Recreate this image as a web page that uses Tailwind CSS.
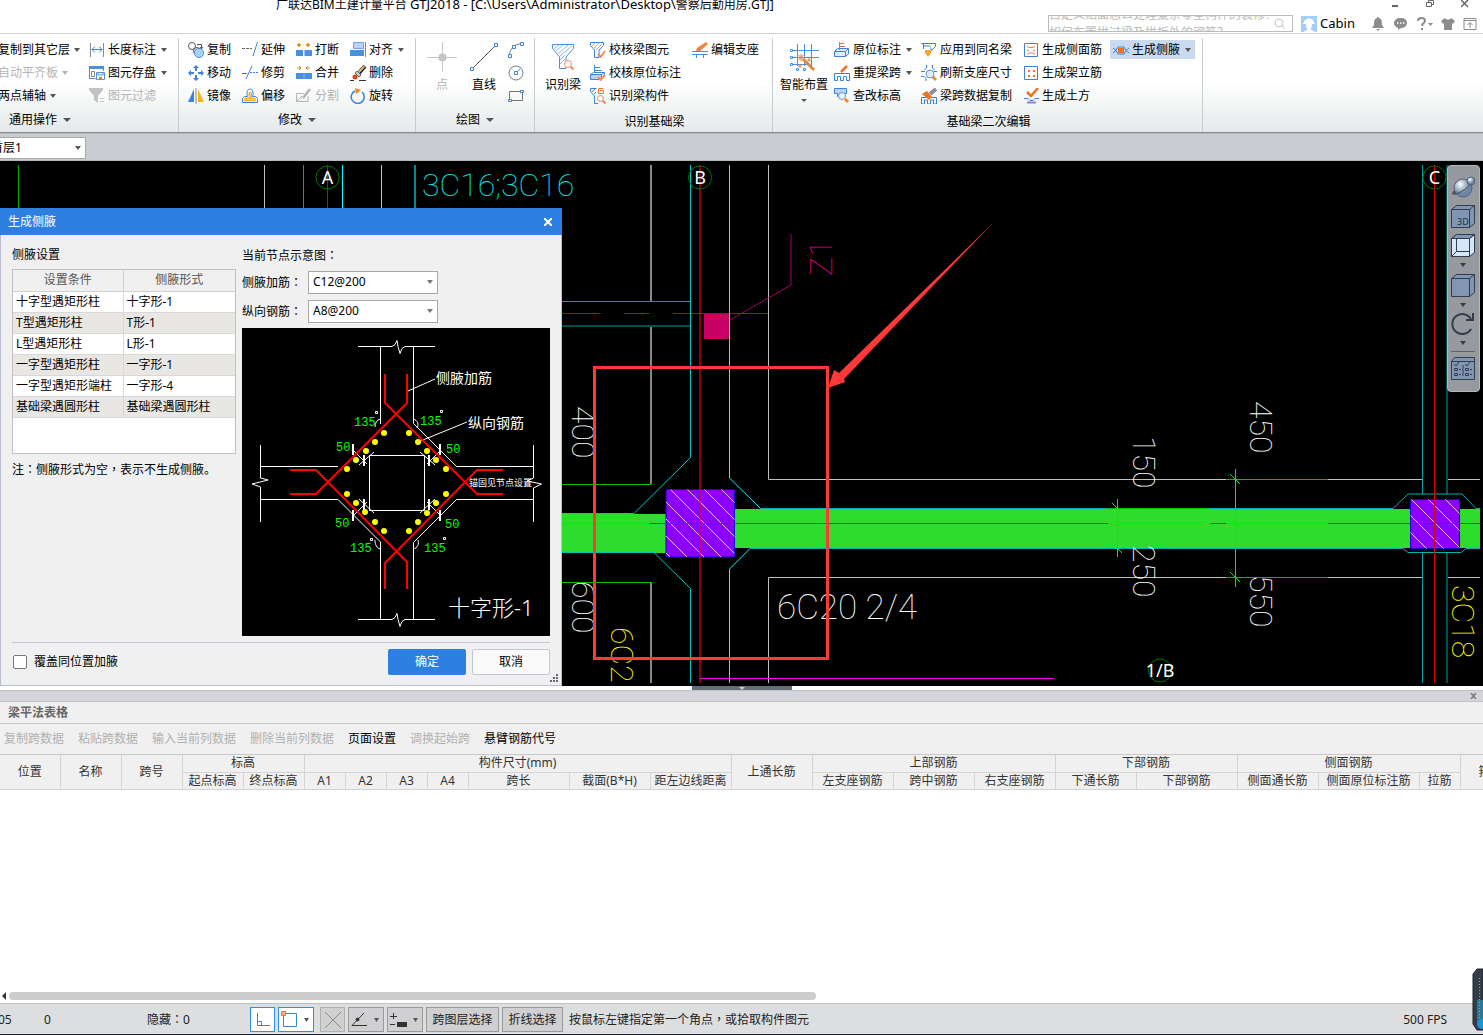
<!DOCTYPE html>
<html lang="zh-CN">
<head>
  <meta charset="UTF-8" />
  <meta name="viewport" content="width=device-width, initial-scale=1.0" />
  <title>广联达BIM土建计量平台 GTJ2018</title>
  <script src="https://cdn.jsdelivr.net/npm/@tailwindcss/browser@4"></script>
</head>
<body class="bg-white text-black text-xs font-['Noto_Sans','Noto_Sans_CJK_SC',sans-serif]">
<div class="relative flex flex-col h-screen overflow-hidden whitespace-nowrap">

  <!-- Title bar -->
  <header class="relative flex-none h-[34px] border-b border-[#d4d4d4] bg-white">
    <h1 class="absolute left-[276px] -top-1 leading-4">广联达BIM土建计量平台 <span class="text-[13px]">GTJ2018 - [C:\Users\Administrator\Desktop\</span>警察后勤用房.GTJ]</h1>
    <div class="absolute right-[14px] top-0 flex gap-[27px] h-2 text-[#666]">
      <button aria-label="最小化"><svg class="block" width="8" height="8"><path d="M1 6h6" stroke="currentColor" stroke-width="2"/></svg></button>
      <button aria-label="还原"><svg class="block" width="8" height="8"><path d="M2.500 2V.5h5v4H6M.5 2.500h5v4h-5z" fill="none" stroke="currentColor"/></svg></button>
      <button aria-label="关闭"><svg class="block" width="8" height="8"><path d="M0 0l7 7M7 0L0 7" stroke="currentColor" stroke-width="1.500"/></svg></button>
    </div>
    <div class="flex items-end h-full justify-end pr-1.5">
      <div class="flex items-start justify-between w-[245px] h-[17px] mb-px mr-2 border border-[#bbb] overflow-hidden">
        <textarea aria-label="搜索" rows="2" readonly class="w-[220px] h-9 -mt-2.5 block resize-none overflow-hidden leading-[18px] text-[#bbb] outline-none whitespace-pre">自定义贴面怎么处理复杂零星构件的装修？
如何布置拱过梁及拱板外的钢筋？</textarea>
        <svg class="mr-1.5 mt-0.5" width="12" height="12" fill="none" stroke="#c4c4c4"><circle cx="5" cy="5" r="4"/><path d="M8 8l3 3"/></svg>
      </div>
      <svg width="16" height="16" class="mb-px"><rect width="16" height="16" fill="#a4cdf8"/><path d="M3 7c0-6 10-6 10 0zM2 7h12v1H2zM5 8h6c0 4-1 5-2 5l5 3H2l5-3C6 13 5 12 5 8z" fill="#fff"/></svg>
      <span class="ml-[3px] mr-4 text-[13px] leading-5">Cabin</span>
      <div class="flex items-center gap-2 h-[18px] text-[#8c8c8c]">
        <svg width="14" height="14" fill="currentColor"><path d="M7 0c1 0 1 1 1 1 3 1 3 4 3 7l2 3H1l2-3c0-3 0-6 3-7 0 0 0-1 1-1zM5 12h4l-2 2z"/></svg>
        <svg width="15" height="14"><path d="M7.500 1C12 1 14 3 14 6s-3 5-6 5l-3 2v-2C2 10 1 8 1 6c0-3 3-5 6.500-5z" fill="currentColor"/><path d="M4 6h1.500M7 6h1.500M10 6h1.500" stroke="#fff" stroke-width="1.500"/></svg>
        <svg width="17" height="14" fill="none" stroke="currentColor" stroke-width="2"><path d="M2 4c0-4 7-4 7 0 0 2-3 2-3 5M6 11v2"/><path d="M12 6h5l-2.500 3z" fill="currentColor" stroke="none"/></svg>
        <svg width="14" height="14" fill="currentColor"><path d="M4 1c1 2 5 2 6 0l4 3-2 3-1-1v7H3V6L2 7 0 4z"/></svg>
        <svg width="14" height="14" fill="none" stroke="currentColor"><path d="M1 1.500h12v11H1zM1 3.500h12M7 11V6M4.500 8L7 5.500 9.500 8"/></svg>
      </div>
    </div>
  </header>

  <!-- Ribbon -->
  <nav class="flex flex-none h-[99px] pt-1 bg-linear-to-b from-white from-50% to-[#e4e9ea] border-b border-[#888d92] overflow-hidden">
    <section class="flex flex-col w-[179px] border-r border-[#c8cacc]">
      <div class="grid grid-cols-[91px_88px] grid-rows-[23px_23px_23px] -ml-0.5">
        <button class="flex items-center gap-1">复制到其它层<svg width="6" height="4" fill="#555"><path d="M0 0h6L3 4z"/></svg></button>
        <button class="flex items-center gap-[3px]"><svg width="16" height="16" fill="none" stroke="#3c82d8"><path d="M1.500 1v14M14.500 1v14" stroke="#888"/><path d="M3 7.500h10M6 4.500l-3 3 3 3M10 4.500l3 3-3 3"/></svg>长度标注<svg class="ml-0.5" width="6" height="4" fill="#555"><path d="M0 0h6L3 4z"/></svg></button>
        <button disabled class="flex items-center gap-1 text-[#b4b4b4]">自动平齐板<svg width="6" height="4" fill="#b4b4b4"><path d="M0 0h6L3 4z"/></svg></button>
        <button class="flex items-center gap-[3px]"><svg width="16" height="16" fill="none" stroke="#4a8fe0"><path d="M.5 14V1.500h14V6M.5 13.500h6"/><path d="M0 2.500h15" stroke-width="3"/><path d="M2.500 6.500h3v5h-3z" stroke="#888"/><path d="M7.500 7.500h8v7h-8zM9 7v3h5V7" fill="#fff"/><path d="M10 12h3v3h-3z" fill="#e8772e" stroke="none"/></svg>图元存盘<svg class="ml-0.5" width="6" height="4" fill="#555"><path d="M0 0h6L3 4z"/></svg></button>
        <button class="flex items-center gap-1">两点辅轴<svg width="6" height="4" fill="#555"><path d="M0 0h6L3 4z"/></svg></button>
        <button disabled class="flex items-center gap-[3px] text-[#b4b4b4]"><svg width="16" height="16" fill="#c2c2c2"><path d="M0 0h14v2L9 8v7l-4-3V8L0 2zM11 10h4v1h-4zM11 13h4v1h-4z"/></svg>图元过滤</button>
      </div>
      <button class="flex items-center gap-1.5 h-[26px] pl-[9px]">通用操作<svg width="8" height="4" fill="#555"><path d="M0 0h8L4 4z"/></svg></button>
    </section>

    <section class="flex flex-col w-[237px] border-r border-[#c8cacc]">
      <div class="grid grid-cols-[54px_54px_54px_60px] grid-rows-[23px_23px_23px] pl-[9px]">
        <button class="flex items-center gap-[3px]"><svg width="16" height="16" fill="none" stroke="#555"><circle cx="4" cy="4" r="3.500"/><path d="M9 2.500h4.500V6M12 5l1.500 2L15 5"/><circle cx="9" cy="9" r="3.500"/><circle cx="11" cy="11" r="4.500" stroke="#3c82d8" fill="#b8dcf5"/><circle cx="11" cy="11" r="2" stroke="#8cbfe8"/></svg>复制</button>
        <button class="flex items-center gap-[3px]"><svg width="16" height="16" fill="none"><path d="M0 6.500h10" stroke="#666" stroke-dasharray="3 1"/><path d="M15.500 0L11 14" stroke="#3c82d8"/></svg>延伸</button>
        <button class="flex items-center gap-[3px]"><svg width="16" height="16"><path d="M0 8h7v6H0zM8.500 8H16v6H8.500z" fill="#4a8fe0"/><path d="M3 1v4M1 3h4M12 1v4M10 3h4" stroke="#e08a1e" stroke-width="1.500"/></svg>打断</button>
        <button class="flex items-center gap-[3px]"><svg width="16" height="16"><path d="M3.500.5h10v6h-10z" fill="#b5d3f7" stroke="#6fa4e4"/><path d="M0 8h14v6H0z" fill="#4a8fe0"/><path d="M15.500 0v15" stroke="#888"/></svg>对齐<svg class="ml-0.5" width="6" height="4" fill="#555"><path d="M0 0h6L3 4z"/></svg></button>
        <button class="flex items-center gap-[3px]"><svg width="16" height="16" fill="none" stroke="#3c82d8" stroke-width="2"><path d="M8 6V2M8 10v4M6 8H2M10 8h4"/><path d="M8 0l3 3H5zM8 16l3-3H5zM0 8l3-3v6zM16 8l-3-3v6z" fill="#3c82d8" stroke="none"/></svg>移动</button>
        <button class="flex items-center gap-[3px]"><svg width="16" height="16" fill="none"><path d="M0 8.500h5" stroke="#666"/><path d="M8 7.500h8" stroke="#3c82d8" stroke-dasharray="2 1"/><path d="M10 1L4 14" stroke="#3c82d8"/></svg>修剪</button>
        <button class="flex items-center gap-[3px]"><svg width="16" height="16"><path d="M0 8h16v6H0z" fill="#4a8fe0"/><path d="M8 9v4" stroke="#8db9ee"/><path d="M1 3h4M3 1l2 2-2 2M14 3h-4M12 1l-2 2 2 2" stroke="#e08a1e" fill="none"/></svg>合并</button>
        <button class="flex items-center gap-[3px]"><svg width="16" height="16"><path d="M0 15.500h4M9 15.500h7" stroke="#333"/><path d="M15 1L8 9" stroke="#222" stroke-width="4"/><path d="M14.500 1L8 8" stroke="#e0b070" stroke-width="2"/><path d="M7 6l4 4-2 2-4-4z" fill="#ccc" stroke="#666"/><circle cx="5" cy="12" r="2.500" fill="#d94a1a"/></svg>删除</button>
        <button class="flex items-center gap-[3px]"><svg width="16" height="16"><path d="M6 1v13H0z" fill="#3c82d8"/><path d="M10 1v13h6z" fill="#f5b31c"/><path d="M8 0v16" stroke="#888"/></svg>镜像</button>
        <button class="flex items-center gap-[3px]"><svg width="16" height="16" fill="none" stroke="#3c82d8"><path d="M.5 14.500v-4l2-2h3c-3-10 8-10 5 0h3l2 2v4z"/><path d="M3 12.500v-2h5c-3-8 3-8 1-1v1h4v2z" stroke="#f5b31c" stroke-width="1.500"/></svg>偏移</button>
        <button disabled class="flex items-center gap-[3px] text-[#b4b4b4]"><svg width="16" height="16" fill="none" stroke="#b4b4b4"><path d="M8 5.500H.5v8H8M12 8v5.500H8M1 13l5-5"/><path d="M14 1L7 10" stroke-width="2.500"/></svg>分割</button>
        <button class="flex items-center gap-[3px]"><svg width="16" height="16" fill="none"><path d="M5 3a6.500 6.500 0 1 0 7 1" stroke="#3c82d8" stroke-width="1.500"/><path d="M5 0l6 2-5 4z" fill="#ee8322"/></svg>旋转</button>
      </div>
      <button class="flex items-center justify-center gap-1.5 h-[26px]">修改<svg width="8" height="4" fill="#555"><path d="M0 0h8L4 4z"/></svg></button>
    </section>

    <section class="flex flex-col w-[119px] border-r border-[#c8cacc]">
      <div class="flex h-[69px] pl-2.5">
        <button disabled class="flex flex-col items-center w-8 pt-1 text-[#b4b4b4]"><svg class="mb-[5px] flex-none" width="30" height="30"><path d="M15.500 0v30M0 15.500h30" stroke="#c4c4c4"/><circle cx="15.500" cy="15.500" r="4" fill="#c4c4c4"/></svg>点</button>
        <button class="flex flex-col items-center w-[52px] pt-1"><svg class="mb-[5px] flex-none" width="30" height="30" fill="#fff"><path d="M3 27L27 3" stroke="#555"/><path d="M1.500 25.500h3v3h-3zM25.500 1.500h3v3h-3z" stroke="#3c82d8"/></svg>直线</button>
        <div class="-ml-0.5 grid grid-rows-[23px_23px_23px] items-center">
          <button aria-label="弧"><svg width="16" height="16" fill="none"><path d="M1.500 13C2 6 7 2 14 1.500" stroke="#777"/><path d="M.5 12.500h3v3h-3zM4.500 3.500h3v3h-3zM12.500.5h3v3h-3z" fill="#fff" stroke="#3c82d8"/></svg></button>
          <button aria-label="圆"><svg width="16" height="16" fill="none"><circle cx="8" cy="8" r="7" stroke="#6f7f8c"/><path d="M6.500 6.500h3v3h-3zM9 7l3-3" stroke="#3c82d8"/></svg></button>
          <button aria-label="矩形"><svg width="16" height="16" fill="none"><path d="M1.500 3.500h13v9h-13z" stroke="#777"/><path d="M.5 11.500h3v2h-3zM12.500 2.500h3v2h-3z" fill="#fff" stroke="#3c82d8"/></svg></button>
        </div>
      </div>
      <button class="flex items-center justify-center gap-1.5 h-[26px]">绘图<svg width="8" height="4" fill="#555"><path d="M0 0h8L4 4z"/></svg></button>
    </section>

    <section class="flex flex-col w-[238px] border-r border-[#c8cacc]">
      <div class="flex h-[69px] pl-2.5">
        <button class="flex flex-col items-center w-9 pt-1"><svg class="mb-[5px] flex-none" width="24" height="30" fill="none" stroke="#4a8fe0"><path d="M1.500 2.500h21v4L15 15v11.500H8.500V15L1.500 6.500z"/><path d="M3 7l5-4M5 9l7-6M7 12l10-9M9 14L21 4M9 18l5-5M9 22l5-5" stroke="#8db9ee"/><circle cx="17" cy="22" r="3.500" stroke="#f58a5c" fill="#fff"/><path d="M19.500 24.500l3 3" stroke="#f58a5c" stroke-width="2"/></svg>识别梁</button>
        <div class="grid grid-cols-[102px_80px] grid-rows-[23px_23px_23px] pl-[9px]">
          <button class="flex items-center gap-[3px]"><svg width="16" height="16" fill="none" stroke="#3c82d8"><path d="M.5.5h13v3L9 8v7.500H4.500V8l-4-4.500z"/><path d="M2 4l3-3M4 6l5-5M6 8l6-6" stroke="#8db9ee"/><path d="M8 12l2.500 3L15 9" stroke="#f58a5c" stroke-width="2"/></svg>校核梁图元</button>
          <button class="flex items-center gap-[3px]"><svg width="16" height="16"><path d="M14 0l2 2-8 7H4l1-3z" fill="#ee8339"/><path d="M0 9.500h16M0 12.500h16M4.500 12v4M11.500 12v4" stroke="#4a8fe0"/></svg>编辑支座</button>
          <button class="col-span-2 flex items-center gap-[3px]"><svg width="16" height="16" fill="none" stroke="#3c82d8"><path d="M4.500 0v8M4 2.500h6M4 5.500h8M.5 9.500l3-2h11l-3 2zM.5 9.500v5h11v-5M14.500 8v4" /><path d="M1 10h10v4H1z" fill="#b5d3f7" stroke="none"/><path d="M8 12l2.500 3L15 10" stroke="#f58a5c" stroke-width="2"/></svg>校核原位标注</button>
          <button class="col-span-2 flex items-center gap-[3px]"><svg width="16" height="16" fill="none" stroke="#3c82d8"><path d="M.5.5h6M.5.5v3L4.500 8v7.500H8M2 4l3-3M4 6l2-2"/><path d="M13.500.5h-5v5h5v-3H10" stroke="#ee7c38"/><circle cx="10.500" cy="10.500" r="3" stroke="#f58a5c"/><path d="M12.500 12.500l3 3" stroke="#f58a5c" stroke-width="2"/></svg>识别梁构件</button>
        </div>
      </div>
      <span class="h-[26px] pt-[7px] pl-0.5 text-center leading-4">识别基础梁</span>
    </section>

    <section class="flex flex-col w-[430px] border-r border-[#c8cacc]">
      <div class="flex h-[69px] pl-[7px]">
        <button class="flex flex-col items-center w-12 pt-1"><svg class="mb-[5px] flex-none" width="30" height="30" fill="none" stroke="#4a8fe0"><path d="M8.500 2v22M15.500 2v22M22.500 2v22M3 8.500h27M3 15.500h27M3 22.500h15"/><path d="M1.500 7.500h2v2h-2zM1.500 14.500h2v2h-2zM1.500 21.500h2v2h-2zM7.500 26.500h2v2h-2zM14.500 26.500h2v2h-2z" fill="#fff"/><path d="M14 17l11 11" stroke="#d98a48" stroke-width="3"/><path d="M12 12v7M9 15.500h7M9.500 13l5 5M14.500 13l-5 5M20 16v4M18 18h4M11 22v4M9 24h4" stroke="#ee7c38"/></svg>智能布置<svg class="mt-1.5 flex-none" width="6" height="3" fill="#555"><path d="M0 0h6L3 3z"/></svg></button>
        <div class="grid grid-cols-[87px_103px_86px_85px] grid-rows-[23px_23px_23px] pl-1.5">
          <button class="flex items-center gap-[3px]"><svg width="16" height="16" fill="none" stroke="#3c82d8"><path d="M.5 9.500l3-3h11l-3 3zM.5 9.500v5h11v-5M14.500 7v5l-3 2.500" fill="#dceafb"/><path d="M5.500 0v8M5 1.500h5M5 4.500h6" stroke="#d9703a"/></svg>原位标注<svg class="ml-0.5" width="6" height="4" fill="#555"><path d="M0 0h6L3 4z"/></svg></button>
          <button class="flex items-center gap-[3px]"><svg width="16" height="16" fill="none" stroke="#3c82d8"><path d="M2.500 7V2L.5 1.500h14v3l-4 4-1-3M2.500 4h7"/><path d="M4 8h6v3l-3 4-3-4z" fill="#f5a623" stroke="none"/></svg>应用到同名梁</button>
          <button class="flex items-center gap-[3px]"><svg width="15" height="16" fill="none" stroke="#3c82d8"><path d="M.5 1.500h13v13H.5z"/><path d="M3 4l2 1.500h4L11 4M3 8.500h2M9 8.500h2M3 12.500L5 11h4l2 1.500" stroke="#ee7c38"/></svg>生成侧面筋</button>
          <button class="flex items-center gap-[3px] h-[19px] self-center pl-[3px] bg-[#c9d9f0]"><svg width="16" height="16" fill="none" stroke="#3c82d8"><path d="M0 6l3 2.500L0 11M16 6l-3 2.500L16 11M3 8.500L5 5h6l2 3.500L11 12H5z"/><path d="M5 6h6v5H5z" fill="#ee7320" stroke="none"/></svg>生成侧腋<svg class="ml-0.5" width="6" height="4" fill="#555"><path d="M0 0h6L3 4z"/></svg></button>
          <button class="flex items-center gap-[3px]"><svg width="16" height="16" fill="none" stroke="#3c82d8"><path d="M.5 15.500v-7h15v7h-3v-4h-3v4h-3v-4h-3v4z"/><path d="M13 1L7 7" stroke="#ee7320" stroke-width="2.500"/></svg>重提梁跨<svg class="ml-0.5" width="6" height="4" fill="#555"><path d="M0 0h6L3 4z"/></svg></button>
          <button class="flex items-center gap-[3px]"><svg width="16" height="16" fill="none" stroke="#3c82d8"><path d="M5.500 0v3l-2 2M11.500 0v3l2 2M0 6.500h4M13 6.500h3M0 11.500h3l2 2v3"/><circle cx="9" cy="9" r="4" fill="#dceafb" stroke="#6f95c4"/><path d="M12 12l3 3" stroke="#f08c1e" stroke-width="3"/></svg>刷新支座尺寸</button>
          <button class="col-span-2 flex items-center gap-[3px]"><svg width="15" height="16" fill="none" stroke="#3c82d8"><path d="M.5 1.500h13v13H.5z"/><path d="M4 5h2v2H4zM9 5h2v2H9zM4 10h2v2H4zM9 10h2v2H9z" fill="#ee7320" stroke="none"/></svg>生成架立筋</button>
          <button class="flex items-center gap-[3px]"><svg width="16" height="16" fill="none" stroke="#3c82d8"><path d="M.5.5h12v5h-2v3h-7v-3h-3z" fill="#b5d3f7"/><circle cx="8" cy="8" r="3.500" fill="#eef5ff" stroke="#6f95c4"/><path d="M11 11l3 3" stroke="#f08c1e" stroke-width="3"/></svg>查改标高</button>
          <button class="flex items-center gap-[3px]"><svg width="16" height="16" fill="none" stroke="#3c82d8"><path d="M.5 16V9.500h15V16h-3v-4h-3v4h-3v-4h-3v4z"/><path d="M1 6l5-3 5 6-3 3z" fill="#ee7320" stroke="none"/><path d="M9 6l6-5" stroke="#889099" stroke-width="4"/></svg>梁跨数据复制</button>
          <button class="col-span-2 flex items-center gap-[3px]"><svg width="15" height="16" fill="none"><path d="M3 4l4 4 7-8" stroke="#ee7320" stroke-width="2.500"/><path d="M0 10.500h4l2 2h3l2-2h4" stroke="#3c82d8"/><path d="M3 14.500h9" stroke="#889099" stroke-width="2"/></svg>生成土方</button>
        </div>
      </div>
      <span class="h-[26px] pt-[7px] pl-0.5 text-center leading-4">基础梁二次编辑</span>
    </section>
  </nav>

  <!-- Floor selector -->
  <div class="flex-none h-7 pt-[3px] bg-[#c9ccd1] border-t border-[#b4b8bc] border-b overflow-hidden">
    <div class="relative w-[86px]">
      <select aria-label="楼层" class="appearance-none block w-[100px] h-[22px] -ml-3.5 pl-1 bg-white border border-[#a8a8a8] outline-none"><option>首层1</option></select>
      <svg class="absolute right-[5px] top-[9px] pointer-events-none" width="6" height="4" fill="#555"><path d="M0 0h6L3 4z"/></svg>
    </div>
  </div>

  <!-- Drawing area -->
  <main class="relative flex-none h-[525px] bg-black overflow-hidden">
    <svg class="block w-full h-full font-[Roboto,sans-serif]" fill="none">
      <defs>
        <clipPath id="view"><rect x="0" y="165" width="1480" height="518"/></clipPath>
        <pattern id="hatch" width="17" height="17" patternUnits="userSpaceOnUse" x="7" y="13"><path d="M-1-1l19 19" stroke="#e2ccff"/></pattern>
      </defs>
      <g transform="translate(0 -161)" clip-path="url(#view)">
        <path d="M18.500 165v50" stroke="#00b400"/>
        <path d="M264.500 165v50M381.500 165v50" stroke="#c0c0c0"/>
        <path d="M651 165v136M651 326v158M651 582v101" stroke="#888" stroke-width="2"/>
        <path d="M768.500 165v314.500H1422M1447 479.500h33M768.500 683V577.500H1422M1447 577.500h33" stroke="#c0c0c0"/>
        <path d="M303.500 165v50M562 301.500h128M1422.500 165v329M1422.500 552v131" stroke="#00a0a0"/>
        <path d="M415 165v50" stroke="#008c8c" stroke-width="2"/>
        <path d="M562 326h128M1447 165v329M1447 552v131" stroke="#005050" stroke-width="2"/>
        <path d="M342.500 165v50" stroke="#0ff"/>
        <path d="M562 313.500h38M624 313.500h25M673 313.500h95" stroke="#c80000"/>

        <!-- beam -->
        <path d="M562 514h104v39H562zM735 509h675v39H735zM1460 509h20v39h-20z" fill="#2ddc2d"/>
        <path d="M562 513.500h72l56.500-56V165M562 552.500h92l36.500 36V683" stroke="#00c4c8"/>
        <path d="M729.500 165v313l31 30.500M750 548.500l-20.500 20.500v114" stroke="#0ff"/>
        <path d="M760 508.500h633l15-14.500h54l14 14.500h4M750 548.500h653l5 4h53l5-4h14" stroke="#00b0b0"/>
        <path d="M562 484.500h89M562 582.500h89M1226 479.500h102M1226 577.500h102M1108 508.500h102" stroke="#00c000"/>
        <path d="M562 523.500h88M1108 523.500h103M1226 523.500h102M1117.500 499v58M1235.500 469v118M1112 503l10 10M1112 518l10 10M1112 543l10 10M1230 474l10 10M1230 518l10 10M1230 572l10 10" stroke="#00f000"/>
        <path d="M666 489.500h68.500V557H666zM1410.500 499.500h49v49h-49z" fill="#8c00ff" stroke="#1400c8"/>
        <path d="M666 489.500h68.500V557H666zM1410.500 499.500h49v49h-49z" fill="url(#hatch)"/>
        <path d="M650 523.500h458M1211 523.500h15M1328 523.500h152" stroke="#c80000" stroke-opacity=".8"/>
        <path d="M327.500 165v50M1434.500 165v518" stroke="#dc0000"/>
        <path d="M700 165v518" stroke="#dc0032" stroke-width="2" stroke-opacity=".6"/>
        <path d="M704 314h25v25h-25z" fill="#c80064"/>
        <path d="M791 234v51l-61 35" stroke="#a00064"/>
        <path d="M700 678.500h353" stroke="#f0f"/>

        <!-- axis labels -->
        <g stroke="#007800"><circle cx="327.500" cy="177.500" r="11.500"/><circle cx="700" cy="177.500" r="11.500"/><circle cx="1434.500" cy="177.500" r="11.500"/><circle cx="1160" cy="670.500" r="11.500"/></g>
        <g fill="#fff" font-size="18" text-anchor="middle" class="font-['Noto_Sans',sans-serif]">
          <text x="327.500" y="184">A</text><text x="700" y="184">B</text><text x="1434.500" y="184">C</text><text x="1160" y="677">1/B</text>
        </g>

        <!-- dimensions -->
        <g font-weight="100" fill="#fff">
          <text x="422" y="196" font-size="32" fill="#00f0f0">3C16;3C16</text>
          <text x="777" y="619" font-size="35">6C20 2/4</text>
          <g font-size="32">
            <text transform="translate(572 406) rotate(90)">400</text>
            <text transform="translate(572 581) rotate(90)">600</text>
            <text transform="translate(1133 436) rotate(90)">150</text>
            <text transform="translate(1133 545) rotate(90)">250</text>
            <text transform="translate(1250 401) rotate(90)">450</text>
            <text transform="translate(1250 575) rotate(90)">550</text>
            <text transform="translate(611 627) rotate(90)" fill="#ff0">6C2</text>
            <text transform="translate(1452 585) rotate(90)" fill="#ff0">3C18</text>
            <text transform="translate(832 276) rotate(-90)" fill="#dc0082">Z1</text>
          </g>
        </g>

        <!-- callout -->
        <path d="M594.500 367.500h233v291h-233z" stroke="#ff3838" stroke-width="3"/>
        <path d="M828 388l6-18 5 3 155-151-150 157 1 3z" fill="#ff3838"/>
      </g>
    </svg>

    <!-- View tools -->
    <aside class="absolute right-[3px] top-1 flex flex-col items-center w-[33px] h-[227px] pt-[9px] pr-0.5 bg-[#96999e] border border-[#b4b6b8] rounded-sm">
      <button aria-label="动态观察"><svg class="block" width="24" height="24"><defs><radialGradient id="ball" cx=".35" cy=".3"><stop offset="0" stop-color="#fff"/><stop offset="1" stop-color="#6d86a4"/></radialGradient></defs><circle cx="12" cy="13" r="9" fill="url(#ball)" stroke="#50617a"/><path d="M2 18c2 4 18-6 19-12" fill="none" stroke="#3c4656"/><circle cx="20" cy="6" r="4" fill="url(#ball)" stroke="#50617a"/><circle cx="3" cy="18" r="2" fill="#555"/></svg></button>
      <button aria-label="三维" class="mt-[5px]"><svg class="block" width="24" height="25" fill="#8096b2" stroke="#323c4c"><path d="M.5 5.500l5-4h18v18l-5 4H.5z"/><path d="M.5 5.500h18v18M18.500 5.500l5-4" fill="none"/><text x="6" y="21" font-size="9" stroke="none" fill="#222c3c">3D</text></svg></button>
      <button aria-label="二维" class="mt-1"><svg class="block" width="24" height="25" stroke="#323c4c"><path d="M.5 5.500l5-4h18v18l-5 4H.5z" fill="#d4e6fa"/><path d="M.5 5.500l5-4h18l-5 4z" fill="#8096b2"/><path d="M.5 5.500h18v18M18.500 5.500l5-4M5.500 5.500v13h13M5.500 18.500l-5 5" fill="none"/></svg></button>
      <svg class="mt-[5px] flex-none" width="6" height="4" fill="#323c4c"><path d="M0 0h6L3 4z"/></svg>
      <button aria-label="视图" class="mt-1.5"><svg class="block" width="24" height="25" fill="#8096b2" stroke="#323c4c"><path d="M.5 5.500l5-4h18v18l-5 4H.5z"/><path d="M.5 5.500h18v18M18.500 5.500l5-4" fill="none"/></svg></button>
      <svg class="mt-[5px] flex-none" width="6" height="4" fill="#323c4c"><path d="M0 0h6L3 4z"/></svg>
      <button aria-label="旋转视图" class="mt-[5px]"><svg class="block" width="24" height="24" fill="none" stroke="#323c4c" stroke-width="2"><path d="M20 17a10 10 0 1 1 0-10M22 1v7h-7"/></svg></button>
      <svg class="mt-[5px] flex-none" width="6" height="4" fill="#323c4c"><path d="M0 0h6L3 4z"/></svg>
      <hr class="w-6 mt-1.5 border-[#5c6068]" />
      <button aria-label="显示设置" class="mt-1"><svg class="block" width="24" height="25" stroke="#323c4c" fill="none"><path d="M.5 5.500l3-4h20v22H.5z" fill="#8096b2"/><path d="M.5 5.500h23M12 9v11M3 8l2 2 3-4M14 8l2 2 3-4M3.500 12.500h3v2h-3zM3.500 17.500h3v2h-3zM14.500 12.500h3v2h-3zM14.500 17.500h3v2h-3zM8 13.500h2M8 18.500h2M19 13.500h2M19 18.500h2"/></svg></button>
    </aside>

    <!-- Haunch dialog -->
    <div role="dialog" aria-labelledby="dlg-title" class="absolute left-0 top-[47px] flex flex-col w-[562px] h-[478px] bg-[#f0f0f0] border border-[#b8c0d0]">
      <div class="flex flex-none items-center justify-between h-[27px] -mt-px -mx-px pl-2 pr-2.5 bg-[#2d80e2] text-white">
        <h2 id="dlg-title">生成侧腋</h2>
        <button aria-label="关闭"><svg width="8" height="8" stroke="#fff" stroke-width="2"><path d="M0 0l8 8M8 0L0 8"/></svg></button>
      </div>
      <div class="flex gap-1.5 px-[11px] pt-3">
        <div class="w-[224px]">
          <h3 class="leading-4">侧腋设置</h3>
          <div class="h-[185px] mt-1.5 bg-white border border-[#c0c0c0]">
            <table class="w-full table-fixed border-collapse">
              <colgroup><col class="w-[110px]" /><col /></colgroup>
              <thead><tr class="h-[21px] bg-[#f0f0f0] text-[#555]"><th class="font-normal border-r border-b border-[#d0d0d0]">设置条件</th><th class="font-normal border-b border-[#d0d0d0]">侧腋形式</th></tr></thead>
              <tbody>
                <tr class="h-[21px]"><td class="pl-[3px] border-r border-b border-[#d8d8d8]">十字型遇矩形柱</td><td class="pl-[3px] border-b border-[#d8d8d8]">十字形-1</td></tr>
                <tr class="h-[21px] bg-[#e8e7e3]"><td class="pl-[3px] border-r border-b border-[#d8d8d8]">T型遇矩形柱</td><td class="pl-[3px] border-b border-[#d8d8d8]">T形-1</td></tr>
                <tr class="h-[21px]"><td class="pl-[3px] border-r border-b border-[#d8d8d8]">L型遇矩形柱</td><td class="pl-[3px] border-b border-[#d8d8d8]">L形-1</td></tr>
                <tr class="h-[21px] bg-[#e8e7e3]"><td class="pl-[3px] border-r border-b border-[#d8d8d8]">一字型遇矩形柱</td><td class="pl-[3px] border-b border-[#d8d8d8]">一字形-1</td></tr>
                <tr class="h-[21px]"><td class="pl-[3px] border-r border-b border-[#d8d8d8]">一字型遇矩形端柱</td><td class="pl-[3px] border-b border-[#d8d8d8]">一字形-4</td></tr>
                <tr class="h-[21px] bg-[#e8e7e3]"><td class="pl-[3px] border-r border-b border-[#d8d8d8]">基础梁遇圆形柱</td><td class="pl-[3px] border-b border-[#d8d8d8]">基础梁遇圆形柱</td></tr>
              </tbody>
            </table>
          </div>
          <p class="mt-[7px] leading-4">注<span class="font-['Noto_Sans_CJK_TC',sans-serif]" lang="zh-TW">：</span>侧腋形式为空<span class="font-['Noto_Sans_CJK_TC',sans-serif]" lang="zh-TW">，</span>表示不生成侧腋。</p>
        </div>
        <div class="w-[308px]">
          <h3 class="leading-4">当前节点示意图<span class="font-['Noto_Sans_CJK_TC',sans-serif]" lang="zh-TW">：</span></h3>
          <div class="flex items-center h-[22px] mt-[7px]">
            <label for="haunch-bar" class="w-[66px]">侧腋加筋<span class="font-['Noto_Sans_CJK_TC',sans-serif]" lang="zh-TW">：</span></label>
            <div class="relative">
              <select id="haunch-bar" class="appearance-none block w-[130px] h-[23px] pl-1 bg-white border border-[#a8a8a8] outline-none"><option>C12@200</option></select>
              <svg class="absolute right-[5px] top-[9px] pointer-events-none" width="6" height="4" fill="#777"><path d="M0 0h6L3 4z"/></svg>
            </div>
          </div>
          <div class="flex items-center h-[22px] mt-[7px]">
            <label for="long-bar" class="w-[66px]">纵向钢筋<span class="font-['Noto_Sans_CJK_TC',sans-serif]" lang="zh-TW">：</span></label>
            <div class="relative">
              <select id="long-bar" class="appearance-none block w-[130px] h-[23px] pl-1 bg-white border border-[#a8a8a8] outline-none"><option>A8@200</option></select>
              <svg class="absolute right-[5px] top-[9px] pointer-events-none" width="6" height="4" fill="#777"><path d="M0 0h6L3 4z"/></svg>
            </div>
          </div>
          <svg class="block mt-1.5 bg-black" width="308" height="308" fill="none" stroke="#fff">
            <path d="M116 18.500h34l3-2 2-4 1 6 2 7 2-5 3-2h30M116 291.500h34l3-2 2-4 1 6 2 7 2-5 3-2h30M18.500 117v33l7.500 2-16 4 8.500 3v35M291.500 117v33l-6 3 14 3-8 4v34"/>
            <path d="M138.500 18v78M171.500 18v77.500l43 43h77M214.500 171.500h77M214.500 171.500l-43 43v77M138.500 291v-77l-42.500-42.500H18M18 138.500h78"/>
            <path d="M127.500 127.500h55v55h-55z"/>
            <path d="M193 51l-27 12M225 94l-49 20M111 122l14 14M117 137l15-13M199 122l-14 14M193 137l-15-13M111 188l14-14M117 171l15 14M199 188l-14-14M193 171l-15 14M133 99c0-4 2-7 5-8M171 91c5 1 6 6 4 9M133 212c0 5 2 8 5 9M171 221c5-1 6-5 5-9"/>
            <path d="M111 116v11M122 127v11M198 116v11M187 127v11M111 182v11M122 171v11M198 182v11M187 171v11" stroke-width="2"/>
            <path d="M133.500 83.500h2v2h-2zM198.500 82.500h2v2h-2zM128.500 210.500h2v2h-2zM201.500 209.500h2v2h-2z"/>
            <path d="M143 46v29l92 91h26M165 46v29l-91 91H48M48 142h26l91 92v27M261 142h-26l-92 93v26" stroke="#f00" stroke-width="2"/>
            <path d="M142 105h0M133 114h0M124 123h0M114 132h0M105 141h0M167 105h0M176 114h0M185 123h0M194 132h0M204 141h0M105 166h0M114 175h0M123 184h0M133 194h0M142 203h0M204 166h0M194 175h0M185 185h0M176 194h0M167 203h0" stroke="#ff0" stroke-width="6" stroke-linecap="round"/>
            <g fill="#fff" stroke="none">
              <text x="194" y="55" font-size="14">侧腋加筋</text>
              <text x="226" y="100" font-size="14">纵向钢筋</text>
              <text x="227" y="158" font-size="9">锚固见节点设置</text>
              <text x="206" y="288" font-size="22" font-weight="300">十字形-1</text>
            </g>
            <g fill="#0f0" stroke="none" font-size="12" class="font-['Liberation_Mono',monospace]">
              <text x="112" y="98">135</text><text x="178" y="97">135</text><text x="94" y="123">50</text><text x="204" y="125">50</text>
              <text x="93" y="199">50</text><text x="203" y="200">50</text><text x="108" y="224">135</text><text x="182" y="224">135</text>
            </g>
          </svg>
        </div>
      </div>
      <div class="flex items-center gap-1.5 mx-[11px] mt-1.5 pt-1.5 border-t border-[#c0c8d8]">
        <label class="flex items-center gap-[7px] mr-auto pl-px"><input type="checkbox" class="appearance-none size-3.5 bg-white border border-[#777] rounded-xs" />覆盖同位置加腋</label>
        <button class="w-[78px] h-[26px] bg-[#2d80e2] text-white rounded-xs">确定</button>
        <button class="w-[78px] h-[26px] bg-[#fafafa] border border-[#c0c8d8] rounded-xs">取消</button>
      </div>
      <svg class="absolute right-[3px] bottom-[3px]" width="8" height="8" fill="#667"><path d="M6 0h2v2H6zM3 3h2v2H3zM6 3h2v2H6zM0 6h2v2H0zM3 6h2v2H3zM6 6h2v2H6z"/></svg>
    </div>
  </main>

  <!-- Splitter -->
  <div class="flex-none h-1">
    <button aria-label="折叠" class="block w-[100px] h-1 ml-[692px] bg-[#646e78]"><svg class="block mx-auto" width="6" height="3" fill="#c8ccd0"><path d="M0 0h6L3 3z"/></svg></button>
  </div>

  <!-- Beam table panel -->
  <section class="flex flex-col flex-1 min-h-0">
    <div class="flex flex-none justify-end items-center h-3 pr-1.5 bg-[#d4d5da] border-y border-[#c0c2c8]">
      <button aria-label="关闭面板"><svg class="block" width="7" height="6" stroke="#777" stroke-width="1.500"><path d="M1 0l5 6M6 0L1 6"/></svg></button>
    </div>
    <h2 class="flex-none h-[22px] pl-2 bg-[#f0f0f0] border-b border-[#c8c8c8] font-bold leading-[22px] text-[#666]">梁平法表格</h2>
    <div class="flex flex-none items-center gap-3.5 h-[31px] pl-1 bg-[#f0f0f0] border-b border-[#c8c8c8]">
      <button disabled class="text-[#b0b0b0]">复制跨数据</button>
      <button disabled class="text-[#b0b0b0]">粘贴跨数据</button>
      <button disabled class="text-[#b0b0b0]">输入当前列数据</button>
      <button disabled class="text-[#b0b0b0]">删除当前列数据</button>
      <button>页面设置</button>
      <button disabled class="text-[#b0b0b0]">调换起始跨</button>
      <button>悬臂钢筋代号</button>
    </div>
    <div class="flex-1 min-h-0 overflow-hidden">
      <table class="w-[1520px] table-fixed border-collapse bg-[#f0f0f0] text-[#333] leading-4 [&_th]:p-0 [&_th]:font-normal [&_th]:border-r [&_th]:border-b [&_th]:border-[#d4d4d4]">
        <colgroup>
          <col class="w-[60px]" /><col class="w-[61px]" span="4" /><col class="w-[41px]" span="4" /><col class="w-[101px]" /><col class="w-[81px]" span="7" /><col class="w-[101px]" /><col class="w-[81px]" /><col class="w-[101px]" /><col class="w-[41px]" /><col class="w-[61px]" />
        </colgroup>
        <thead>
          <tr class="h-[17px]">
            <th rowspan="2">位置</th><th rowspan="2">名称</th><th rowspan="2">跨号</th><th colspan="2">标高</th><th colspan="7">构件尺寸(mm)</th><th rowspan="2">上通长筋</th><th colspan="3">上部钢筋</th><th colspan="2">下部钢筋</th><th colspan="3">侧面钢筋</th><th rowspan="2">箍筋</th>
          </tr>
          <tr class="h-[17px]">
            <th>起点标高</th><th>终点标高</th><th>A1</th><th>A2</th><th>A3</th><th>A4</th><th>跨长</th><th>截面(B*H)</th><th>距左边线距离</th><th>左支座钢筋</th><th>跨中钢筋</th><th>右支座钢筋</th><th>下通长筋</th><th>下部钢筋</th><th>侧面通长筋</th><th>侧面原位标注筋</th><th>拉筋</th>
          </tr>
        </thead>
      </table>
    </div>
    <div class="flex flex-none items-center gap-[3px] h-3.5 pl-0.5">
      <svg width="4" height="8" fill="#333"><path d="M4 0v8L0 4z"/></svg>
      <div class="w-[807px] h-2 rounded-full bg-[#cdcdcd]"></div>
    </div>
  </section>

  <!-- Status bar -->
  <footer class="flex flex-none items-center h-8 pt-px bg-[#dddee0] border-t border-[#c0c0c0] border-b border-b-[#1c2433] text-[#222]">
    <span class="w-11 -ml-0.5">05</span>
    <span class="w-[105px] pl-0.5">0</span>
    <span class="w-[103px]">隐藏<span class="font-['Noto_Sans_CJK_TC',sans-serif]" lang="zh-TW">：</span>0</span>
    <div class="flex gap-[3px] h-[25px]">
      <button aria-label="正交" class="w-[25px] bg-white border border-[#2d8ef0] grid place-items-center"><svg width="14" height="14" fill="none" stroke="#3c82d8"><path d="M1.500 0v12.500H14M1.500 8.500h4v4"/></svg></button>
      <button aria-label="捕捉" class="w-9 bg-white border border-[#2d8ef0] flex items-center justify-between pl-0.5 pr-1"><svg width="17" height="17" fill="none" stroke="#3c82d8"><path d="M2.500 2.500h13v13h-13z"/><path d="M.5.5h4v4h-4z" fill="#f9b27c" stroke="#e8772e"/></svg><svg width="5" height="4" fill="#555"><path d="M0 0h5L2.500 4z"/></svg></button>
      <button aria-label="交点" class="w-[25px] ml-[3px] bg-[#d0d0d2] border border-[#b0b0b0] grid place-items-center"><svg width="16" height="16" fill="none" stroke="#888"><path d="M0 0l16 16M16 0L0 16"/></svg></button>
      <button aria-label="角度" class="w-9 bg-[#d0d0d2] border border-[#999] flex items-center justify-between pl-0.5 pr-1"><svg width="16" height="16" fill="none" stroke="#333"><path d="M13 1L1 13.500h15"/><circle cx="6.500" cy="7.500" r="1.500" fill="#333"/></svg><svg width="5" height="4" fill="#555"><path d="M0 0h5L2.500 4z"/></svg></button>
      <button aria-label="偏移点" class="w-9 bg-[#d0d0d2] border border-[#999] flex items-center justify-between pl-0.5 pr-1"><svg width="17" height="16"><path d="M3.500 1v6M0 4.500h7M0 12.500h5" stroke="#333"/><path d="M7 10h10v5H7z" fill="#333"/></svg><svg width="5" height="4" fill="#555"><path d="M0 0h5L2.500 4z"/></svg></button>
      <button class="w-[73px] bg-[#d0d0d2] border border-[#999]">跨图层选择</button>
      <button class="w-[61px] bg-[#d0d0d2] border border-[#999]">折线选择</button>
    </div>
    <span class="ml-1.5">按鼠标左键指定第一个角点<span class="font-['Noto_Sans_CJK_TC',sans-serif]" lang="zh-TW">，</span>或拾取构件图元</span>
    <span class="ml-auto mr-9">500 FPS</span>
  </footer>

  <!-- Edge gauge -->
  <svg class="absolute right-0 bottom-1" width="11" height="63"><path d="M11 1H5L1 6v50l4 6h6z" fill="#333c48" stroke="#1c2430"/><path d="M5 32h6v22H5z" fill="#2b7896"/><path d="M7.500 10v42" stroke="#35c8e8" stroke-dasharray="1 2"/><circle cx="10" cy="56" r="5" fill="#2090d8"/></svg>
</div>
</body>
</html>
